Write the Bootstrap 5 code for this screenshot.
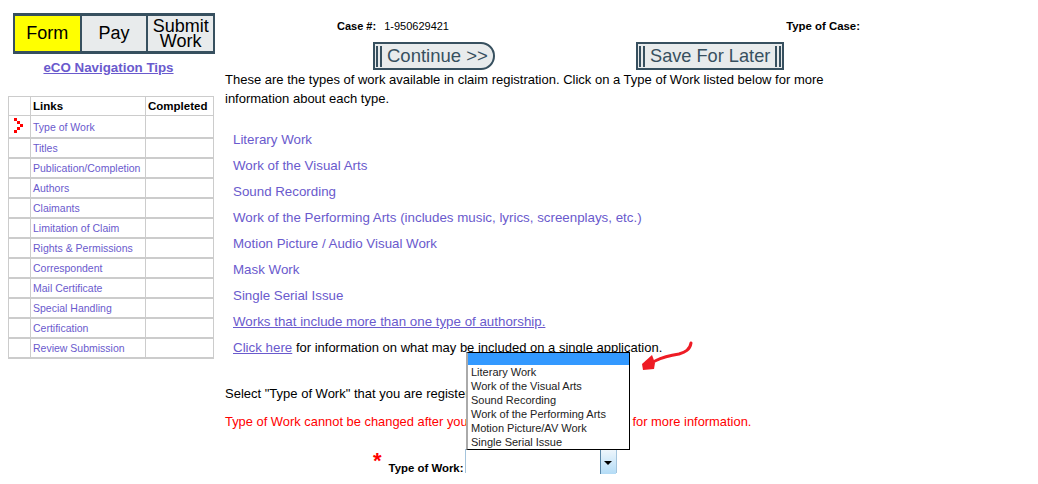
<!DOCTYPE html>
<html lang="en">
<head>
  <meta charset="UTF-8" />
  <title>eCO Type of Work</title>
  <link href="https://cdn.jsdelivr.net/npm/bootstrap@5.3.3/dist/css/bootstrap.min.css" rel="stylesheet">
  <style>
    body { font-family: "Liberation Sans", Arial, sans-serif; font-size: 13px; line-height: 19px; color: #000; background: #fff; height: 484px; overflow: hidden; }
    a { color: #6a5acd; text-decoration: none; }
    .page-wrap { width: 1038px; height: 484px; position: relative; }
    .side-col { width: 225px; flex: none; padding: 13px 0 0 8px; }
    .main-col { width: 640px; flex: none; }

    .step-tabs { width: 202px; height: 41px; margin-left: 5px; background: #37505f; padding: 3px 2px 3px 2px; gap: 2px; }
    .step-tab { flex: 1; background: #e8ebec; font-size: 18px; line-height: 15px; color: #000; text-align: center; }
    .step-tab.current { background: #ff0; }
    .tips-link { display: block; margin: 5px 0 19px 5px; width: 191px; text-align: center; font-weight: 700; font-size: 13.33px; line-height: 18px; text-decoration: underline; }

    .nav-table { width: 206px; border-collapse: collapse; font-size: 10.5px; line-height: 14px; }
    .nav-table td, .nav-table th { border: 1px solid #ccc; border-bottom-width: 2px; padding: 0 2px; height: 20px; }
    .nav-table th { font-size: 11.5px; height: 19px; border-bottom-width: 1px; }
    .nav-table .first-row td { height: 22px; padding-top: 2px; }
    .nav-table .first-row td.c1 { padding-top: 0; }
    .nav-table .c1 { width: 22px; padding: 0; }
    .nav-table .c3 { width: 68px; }

    .case-row { height: 42px; padding: 19px 5px 0 112px; font-size: 11px; line-height: 14px; }
    .case-label { margin-right: 8px; }
    .case-type { font-size: 11.4px; }
    .btn-row { height: 28px; padding-left: 148px; }
    .flat-btn { height: 28px; font-size: 18.5px; line-height: 24px; color: #37505f; background: #e8ebec; border: 2px solid #37505f; white-space: nowrap; }
    .flat-btn.round-end { width: 122px; border-radius: 0 14px 14px 0; }
    .flat-btn.save { width: 148px; margin-left: 141px; font-size: 18.2px; }
    .bar-pair { width: 6px; height: 21px; flex: none; margin-left: 1px; border-left: 2px solid #37505f; border-right: 2px solid #37505f; }
    .bar-pair + .btn-label { margin-left: 5px; }
    .flat-btn .ends { margin-left: auto; margin-right: 1px; }

    .intro { margin: 0; width: 620px; line-height: 19px; }
    .work-links { margin: 19px 0 0 8px; padding: 0; list-style: none; font-size: 13.33px; }
    .work-links li { height: 26px; line-height: 26px; }
    .single-note { margin: 0 0 0 8px; height: 26px; line-height: 26px; }
    .single-note a { font-size: 13.33px; }
    .single-note a, .work-links .more { text-decoration: underline; }
    .select-note { margin: 23px 0 0; }
    .warn-note { margin: 9px 0 0; color: #f00; font-size: 12.9px; }
    .warn-note a { text-decoration: underline; }
    .type-row { margin: 18px 0 0 148px; height: 30px; }
    .req-star { color: #f00; font-size: 22px; line-height: 20px; font-weight: 700; margin: 2px 7px 0 0; }
    .type-label { font-size: 11.4px; font-weight: 700; margin-top: 10px; margin-right: 2px; }
    .fake-select { width: 152px; height: 24px; background: #fff; border: 1px solid #a4c4dc; border-bottom: 0; position: relative; }
    .fake-arrow { position: absolute; right: 0; top: 0; width: 16px; height: 24px; border-left: 1px solid #5b87a8; background: linear-gradient(#eef6fc, #b4dcf6); }
    .fake-arrow::after { content: ""; position: absolute; left: 3px; top: 11px; border: 4px solid transparent; border-top: 4px solid #000; border-bottom: 0; }

    .drop-list { position: absolute; left: 466px; top: 352px; width: 164px; height: 98px; background: #fff; border: 1px solid #000; border-left: 2px solid #aaa; font-size: 11px; line-height: 14px; }
    .drop-sel { height: 12px; background: #3399ff; }
    .drop-item { padding-left: 3px; color: #222; }
    .red-arrow { position: absolute; left: 638px; top: 339px; }
  </style>
</head>
<body>
  <div class="page-wrap d-flex">
    <div class="side-col">
      <div class="step-tabs d-flex">
        <div class="step-tab current d-flex align-items-center justify-content-center">Form</div>
        <div class="step-tab d-flex align-items-center justify-content-center">Pay</div>
        <div class="step-tab d-flex align-items-center justify-content-center">Submit<br>Work</div>
      </div>
      <a class="tips-link" href="#">eCO Navigation Tips</a>
      <table class="nav-table">
        <tr><th class="c1"></th><th>Links</th><th class="c3">Completed</th></tr>
        <tr class="first-row">
          <td class="c1"><svg class="d-block ms-1" width="12" height="16" viewBox="0 0 12 16"><path fill="#f00" d="M1 0h3v3H1zM4 3h3v3H4zM7 6h3v3H7zM4 9h3v3H4zM1 12h3v3H1z"/></svg></td>
          <td><a href="#">Type of Work</a></td><td></td>
        </tr>
        <tr><td></td><td><a href="#">Titles</a></td><td></td></tr>
        <tr><td></td><td><a href="#">Publication/Completion</a></td><td></td></tr>
        <tr><td></td><td><a href="#">Authors</a></td><td></td></tr>
        <tr><td></td><td><a href="#">Claimants</a></td><td></td></tr>
        <tr><td></td><td><a href="#">Limitation of Claim</a></td><td></td></tr>
        <tr><td></td><td><a href="#">Rights &amp; Permissions</a></td><td></td></tr>
        <tr><td></td><td><a href="#">Correspondent</a></td><td></td></tr>
        <tr><td></td><td><a href="#">Mail Certificate</a></td><td></td></tr>
        <tr><td></td><td><a href="#">Special Handling</a></td><td></td></tr>
        <tr><td></td><td><a href="#">Certification</a></td><td></td></tr>
        <tr><td></td><td><a href="#">Review Submission</a></td><td></td></tr>
      </table>
    </div>
    <div class="main-col">
      <div class="case-row d-flex text-nowrap">
        <span><b class="case-label">Case #:</b>1-950629421</span>
        <b class="ms-auto case-type">Type of Case:</b>
      </div>
      <div class="btn-row d-flex">
        <div class="flat-btn round-end d-flex align-items-center"><span class="bar-pair"></span><span class="btn-label">Continue &gt;&gt;</span></div>
        <div class="flat-btn save d-flex align-items-center"><span class="bar-pair"></span><span class="btn-label">Save For Later</span><span class="bar-pair ends"></span></div>
      </div>
      <p class="intro">These are the types of work available in claim registration. Click on a Type of Work listed below for more information about each type.</p>
      <ul class="work-links">
        <li><a href="#">Literary Work</a></li>
        <li><a href="#">Work of the Visual Arts</a></li>
        <li><a href="#">Sound Recording</a></li>
        <li><a href="#">Work of the Performing Arts (includes music, lyrics, screenplays, etc.)</a></li>
        <li><a href="#">Motion Picture / Audio Visual Work</a></li>
        <li><a href="#">Mask Work</a></li>
        <li><a href="#">Single Serial Issue</a></li>
        <li><a class="more" href="#">Works that include more than one type of authorship.</a></li>
      </ul>
      <p class="single-note"><a href="#">Click here</a> for information on what may be included on a single application.</p>
      <p class="select-note">Select "Type of Work" that you are registering.</p>
      <p class="warn-note">Type of Work cannot be changed after you save this screen. <a href="#">Click here</a> for more information.</p>
      <div class="type-row d-flex">
        <span class="req-star">*</span>
        <span class="type-label">Type of Work:</span>
        <div class="fake-select"><span class="fake-arrow"></span></div>
      </div>
    </div>
    <div class="drop-list">
      <div class="drop-sel"></div>
      <div class="drop-item">Literary Work</div>
      <div class="drop-item">Work of the Visual Arts</div>
      <div class="drop-item">Sound Recording</div>
      <div class="drop-item">Work of the Performing Arts</div>
      <div class="drop-item">Motion Picture/AV Work</div>
      <div class="drop-item">Single Serial Issue</div>
    </div>
    <svg class="red-arrow" width="58" height="36" viewBox="0 0 58 36"><path fill="none" stroke="#ee1c25" stroke-width="3" stroke-linecap="round" d="M53 4c-1 7-6 9-12 11-7 1-14 2-24 7"/><path fill="#ee1c25" d="M14 16L4 25l1 6 11-1 1-6z"/></svg>
  </div>
  <script src="https://cdn.jsdelivr.net/npm/bootstrap@5.3.3/dist/js/bootstrap.bundle.min.js"></script>
</body>
</html>
